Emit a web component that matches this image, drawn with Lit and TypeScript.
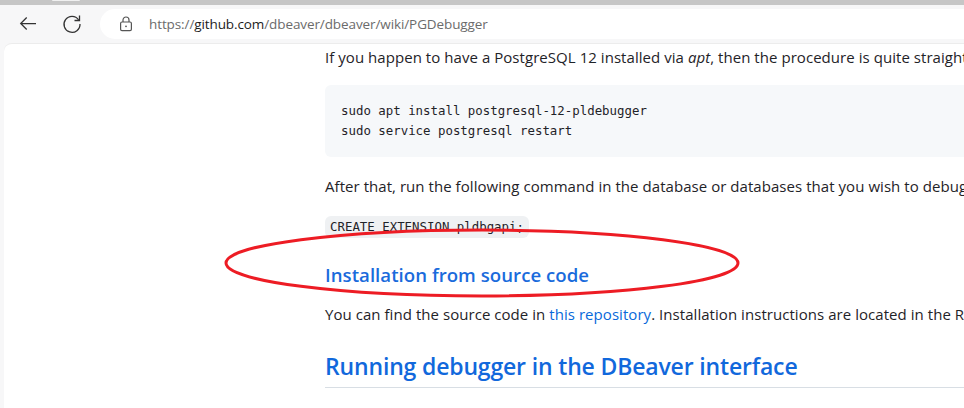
import { LitElement, html, css } from "lit";
import { customElement } from "lit/decorators.js";

@customElement("app-root")
export class AppRoot extends LitElement {
  static styles = css`
    :host { display: block; width: 964px; height: 408px; overflow: hidden; position: relative; background: #f7f7f8; font-family: "Open Sans", "Noto Sans", sans-serif; color: #1f2328; }
    .topline { height: 5px; background: #c6c6c6; }
    .bump { width: 28px; height: 1px; margin-left: 52px; background: #f0f0f0; border-radius: 0 0 8px 8px; }
    .toolbar { height: 38px; display: flex; align-items: center; box-sizing: border-box; }
    .nav { width: 20px; height: 20px; display: block; color: #333; }
    .back { margin-left: 18px; }
    .reload { margin-left: 24px; }
    .address { margin-left: 18px; flex: 1; height: 30px; border-radius: 15px 0 0 15px; background: #fff; display: flex; align-items: center; font-size: 13.5px; color: #6b6b6b; }
    .lock { width: 16px; height: 16px; margin-left: 18px; margin-right: 15px; color: #555; }
    .host { color: #1c1c1c; }
    .url { letter-spacing: -0.1px; }
    .page { margin-left: 4px; height: 365px; background: #fff; border-radius: 8px 0 0 0; border-top: 1px solid #ececec; box-sizing: border-box; padding: 1px 0 0 321px; overflow: hidden; white-space: nowrap; }
    p { margin: 0; font-size: 15px; line-height: 24px; letter-spacing: 0.05px; }
    pre { margin: 16px 0 0 0; background: #f6f8fa; border-radius: 6px; height: 72px; box-sizing: border-box; padding: 16px; width: 700px; font-family: "DejaVu Sans Mono", monospace; font-size: 12.4px; line-height: 20px; color: #1f2328; }
    .p2 { margin-top: 17px; }
    .p3 { margin-top: 18px; }
    code { display: inline-block; background: #eff1f3; border-radius: 6px; font-family: "DejaVu Sans Mono", monospace; font-size: 12.4px; line-height: 22px; padding: 0 5px; letter-spacing: 0; height: 22px; vertical-align: top; }
    h3 { margin: 22px 0 0 0; font-size: 18.6px; line-height: 25px; font-weight: 600; color: #1a6bdc; letter-spacing: 0.04px; }
    .p4 { margin-top: 15px; }
    a { color: #0969da; }
    h2 { margin: 24px 0 0 0; font-size: 23px; line-height: 32px; font-weight: 600; color: #1168dc; letter-spacing: -0.16px; padding-bottom: 5px; border-bottom: 1px solid #d8dee4; }
    .mark { position: absolute; left: 0; top: 0; width: 964px; height: 408px; pointer-events: none; }
  `;

  render() {
    return html`
      <div class="topline"><div class="bump"></div></div>
      <div class="toolbar">
        <svg class="nav back" viewBox="0 0 20 20" fill="none" stroke="currentColor" stroke-width="1.25"><path d="M18 9.5H2.7M8.7 3.5l-6 6 6 6"/></svg>
        <svg class="nav reload" viewBox="0 0 20 20" fill="none" stroke="currentColor" stroke-width="1.3"><path d="M16.6 5.8A8 8 0 1 0 18 10"/><path d="M17.5 1.5v5H12.5"/></svg>
        <div class="address">
          <svg class="lock" viewBox="0 0 16 16" fill="none" stroke="currentColor" stroke-width="1.2"><rect x="2.6" y="6" width="10.8" height="8.6" rx="1.4"/><path d="M5 6V4a3 3 0 0 1 6 0v2"/><circle cx="8" cy="10.3" r="0.9" fill="currentColor" stroke="none"/></svg>
          <span class="url">https://<span class="host">github.com</span>/dbeaver/dbeaver/wiki/PGDebugger</span>
        </div>
      </div>
      <div class="page">
        <p>If you happen to have a PostgreSQL 12 installed via <em>apt</em>, then the procedure is quite straightforward:</p>
        <pre>sudo apt install postgresql-12-pldebugger
sudo service postgresql restart</pre>
        <p class="p2">After that, run the following command in the database or databases that you wish to debug:</p>
        <p class="p3"><code>CREATE EXTENSION pldbgapi;</code></p>
        <h3>Installation from source code</h3>
        <p class="p4">You can find the source code in <a>this repository</a>. Installation instructions are located in the README file.</p>
        <h2>Running debugger in the DBeaver interface</h2>
      </div>
      <svg class="mark" viewBox="0 0 964 408"><ellipse cx="482" cy="263" rx="256" ry="33" fill="none" stroke="#ed1c24" stroke-width="3"/></svg>
    `;
  }
}
